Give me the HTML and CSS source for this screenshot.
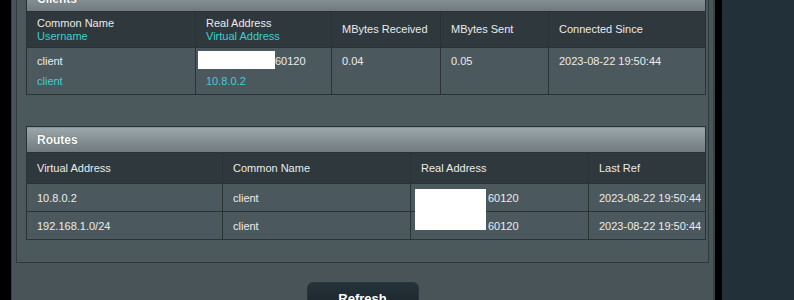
FILE: index.html
```html
<!DOCTYPE html>
<html lang="en">
<head>
  <meta charset="UTF-8">
  <title>VPN Server Status</title>
  <link rel="stylesheet" href="styles.css">
</head>
<body>
  <div class="page">
    <div class="main">
      <div class="box">
        <!-- Clients -->
        <table class="grid clients">
          <colgroup>
            <col style="width:169px"><col style="width:136px"><col style="width:109px"><col style="width:108px"><col style="width:157px">
          </colgroup>
          <tr class="title"><th colspan="5">Clients</th></tr>
          <tr class="head">
            <th>Common Name<br><span class="sub">Username</span></th>
            <th>Real Address<br><span class="sub">Virtual Address</span></th>
            <th>MBytes Received</th>
            <th>MBytes Sent</th>
            <th>Connected Since</th>
          </tr>
          <tr class="data">
            <td>client<br><span class="sub">client</span></td>
            <td><span class="mask"></span>60120<br><span class="sub">10.8.0.2</span></td>
            <td>0.04</td>
            <td>0.05</td>
            <td>2023-08-22 19:50:44</td>
          </tr>
        </table>

        <!-- Routes -->
        <table class="grid routes">
          <colgroup>
            <col style="width:196px"><col style="width:188px"><col style="width:178px"><col style="width:117px">
          </colgroup>
          <tr class="title"><th colspan="4">Routes</th></tr>
          <tr class="head">
            <th>Virtual Address</th>
            <th>Common Name</th>
            <th>Real Address</th>
            <th>Last Ref</th>
          </tr>
          <tr class="row">
            <td>10.8.0.2</td>
            <td>client</td>
            <td class="addr"><span class="mask-block"></span><span class="ip-gap"></span>60120</td>
            <td>2023-08-22 19:50:44</td>
          </tr>
          <tr class="row">
            <td>192.168.1.0/24</td>
            <td>client</td>
            <td class="addr"><span class="ip-gap"></span>60120</td>
            <td>2023-08-22 19:50:44</td>
          </tr>
        </table>
      </div>

      <button class="refresh-btn">Refresh</button>
    </div>
    <div class="gap"></div>
    <div class="side"></div>
  </div>
</body>
</html>
```

FILE: styles.css
```css
* {
  box-sizing: border-box;
}

html, body {
  margin: 0;
  padding: 0;
  height: 100%;
  overflow: hidden;
  background: #000;
  font-family: "Liberation Sans", Arial, sans-serif;
  font-size: 11px;
  color: #ebebeb;
}

.page {
  display: flex;
  height: 300px;
  padding-left: 11px;
}

.main {
  width: 704px;
  background: #485457;
  border-left: 1px solid #394246;
  border-right: 2px solid #3a4447;
  padding: 0 4px;
}

.gap {
  width: 7px;
  background: #000;
}

.side {
  flex: 1;
  background: #22303a;
}

.box {
  margin-top: -26px;
  background: #4b595d;
  border: 1px solid #2f383c;
  padding: 10px 3px 22px 9px;
}

.grid {
  width: 679px;
  border-collapse: collapse;
  table-layout: fixed;
}

.grid th, .grid td {
  border: 1px solid #2a3236;
  padding: 0 10px;
  text-align: left;
  font-weight: normal;
  white-space: nowrap;
}

.grid .title th {
  height: 26px;
  background: linear-gradient(#9ca7ab, #6e7a7e);
  color: #fff;
  font-weight: bold;
  font-size: 12px;
  text-shadow: 0 0 1px #3a4448;
}

.grid .head th {
  background: #2f383c;
  line-height: 13px;
}

.clients .head th {
  height: 36px;
}

.routes .head th {
  height: 31px;
}

.sub {
  color: #3ecfd0;
}

.clients .data td {
  background: #4b595e;
  height: 47px;
  vertical-align: top;
  line-height: 20px;
  padding-top: 3px;
}

.mask {
  display: inline-block;
  vertical-align: top;
  width: 77px;
  height: 18px;
  margin-left: -8px;
  background: #fff;
}

.routes {
  margin-top: 31px;
}

.routes .row td {
  background: #4b595e;
  height: 28px;
}

.addr {
  position: relative;
}

.ip-gap {
  display: inline-block;
  width: 67px;
}

.mask-block {
  position: absolute;
  left: 4px;
  top: 5px;
  width: 71px;
  height: 41px;
  background: #fff;
  z-index: 2;
}

.refresh-btn {
  display: block;
  width: 112px;
  height: 32px;
  margin: 19px auto 0;
  border: 1px solid #2a363c;
  border-radius: 6px;
  background: linear-gradient(#24323a, #1a2428);
  color: #fff;
  font-family: "Liberation Sans", Arial, sans-serif;
  font-weight: bold;
  font-size: 13px;
  cursor: pointer;
}
```
